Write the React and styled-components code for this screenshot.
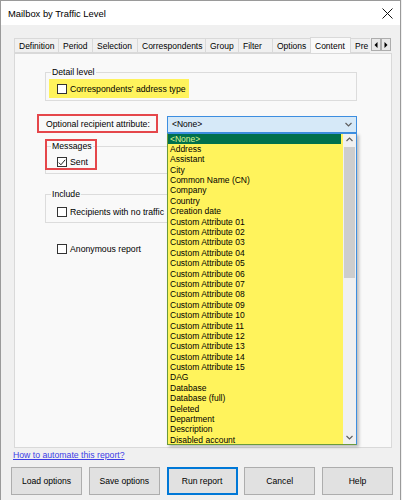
import React from "react";
import styled, { createGlobalStyle } from "styled-components";

const GlobalStyle = createGlobalStyle`
  html, body {
    margin: 0;
    padding: 0;
    background: #f0f0f0;
  }
  body {
    font-family: "Liberation Sans", Arial, sans-serif;
    font-size: 8.7px;
    color: #000;
  }
  * { box-sizing: border-box; }
`;

const tabs = [
  { label: "Definition", w: 45 },
  { label: "Period", w: 35 },
  { label: "Selection", w: 46 },
  { label: "Correspondents", w: 69 },
  { label: "Group", w: 34 },
  { label: "Filter", w: 35 },
  { label: "Options", w: 39 },
  { label: "Content", w: 41, active: true },
  { label: "Pre", w: 22 },
];

const attributes = [
  "<None>", "Address", "Assistant", "City", "Common Name (CN)", "Company",
  "Country", "Creation date",
  ...Array.from({ length: 15 }, (_, i) => `Custom Attribute ${String(i + 1).padStart(2, "0")}`),
  "DAG", "Database", "Database (full)", "Deleted", "Department", "Description",
  "Disabled account",
];

const buttons = ["Load options", "Save options", "Run report", "Cancel", "Help"];

const Window = styled.div`
  width: 401px;
  height: 500px;
  border: 1px solid #9a9a9a;
  border-bottom: none;
  background: #f0f0f0;
  display: flex;
  flex-direction: column;
`;

const TitleBar = styled.div`
  height: 24px;
  background: #fff;
  display: flex;
  align-items: center;
  justify-content: space-between;
  padding: 0 7px 0 7px;
  font-size: 9.4px;
`;

const Body = styled.div`
  flex: 1;
  display: flex;
  flex-direction: column;
  padding: 12px 8px 0 12px;
`;

const TabStrip = styled.div`
  height: 16px;
  display: flex;
  align-items: flex-end;
  position: relative;
  z-index: 2;
`;

const TabList = styled.div`
  width: 357px;
  height: 17px;
  overflow: hidden;
  display: flex;
  align-items: flex-end;
  padding-left: 1px;
`;

const Tab = styled.div`
  flex-shrink: 0;
  width: ${(p) => p.$w}px;
  height: ${(p) => (p.$active ? 17 : 15)}px;
  margin-right: -1px;
  margin-bottom: ${(p) => (p.$active ? -1 : 0)}px;
  border: 1px solid #d9d9d9;
  border-bottom: ${(p) => (p.$active ? "none" : "1px solid #d9d9d9")};
  background: ${(p) => (p.$active ? "#f9f9f9" : "#f0f0f0")};
  position: relative;
  z-index: ${(p) => (p.$active ? 1 : 0)};
  display: flex;
  align-items: center;
  padding-left: 4px;
  font-size: 8.5px;
  white-space: nowrap;
`;

const ScrollArrows = styled.div`
  display: flex;
  margin-left: 1px;
  margin-bottom: 2px;
`;

const ArrowBtn = styled.div`
  width: 10px;
  height: 13px;
  border: 1px solid #adadad;
  background: #e9e9e9;
  display: flex;
  align-items: center;
  justify-content: center;
`;

const Panel = styled.div`
  height: 395px;
  border: 1px solid #d9d9d9;
  background: #f9f9f9;
  padding: 13px 34px 0 30px;
  display: flex;
  flex-direction: column;
  margin-left: 1px;
`;

const Group = styled.fieldset`
  margin: ${(p) => p.$top}px 0 0 0;
  border: 1px solid #dcdcdc;
  padding: ${(p) => p.$pt}px 4px ${(p) => p.$pb}px 6px;
  min-width: 0;
  position: relative;
`;

const Legend = styled.legend`
  padding: 0 1px;
  margin-left: -1px;
  font-size: 8.7px;
  line-height: 10px;
`;

const Highlight = styled.div`
  width: 140px;
  height: 19px;
  margin-left: -3px;
  background: #fff35c;
  display: flex;
  align-items: center;
  padding-left: 8px;
`;

const CheckRow = styled.label`
  display: flex;
  align-items: center;
  gap: 3px;
  margin-left: ${(p) => p.$indent || 0}px;
  margin-top: ${(p) => p.$top || 0}px;
  height: 10px;
  white-space: nowrap;
`;

const Box = styled.span`
  width: 10px;
  height: 10px;
  border: 1px solid #333;
  background: #fff;
  display: inline-flex;
  align-items: center;
  justify-content: center;
  flex-shrink: 0;
`;

const AttributeRow = styled.div`
  margin: 13px 0 0 -8px;
  display: flex;
  align-items: center;
  justify-content: space-between;
`;

const RedBox = styled.div`
  border: 2px solid #e5474b;
  height: 19px;
  width: 121px;
  display: flex;
  align-items: center;
  padding-left: 7px;
  white-space: nowrap;
`;

const RedOverlay = styled.div`
  position: absolute;
  left: -1px;
  top: -12px;
  width: 52px;
  height: 31px;
  border: 2px solid #e5474b;
  pointer-events: none;
`;

const ComboWrap = styled.div`
  position: relative;
  width: 190px;
  margin-top: 1px;
`;

const Combo = styled.div`
  height: 17px;
  border: 1px solid #3d8ee0;
  background: #d6e9f8;
  display: flex;
  align-items: center;
  justify-content: space-between;
  padding: 0 4px 0 4px;
  font-size: 8.5px;
`;

const DropList = styled.div`
  position: absolute;
  top: 100%;
  left: 0;
  width: 190px;
  height: 312px;
  display: flex;
  border: 1px solid #3d8ee0;
  border-left-color: #6a9a3c;
  border-bottom-color: #6a9a3c;
  box-shadow: 2px 2px 3px rgba(0, 0, 0, 0.25);
  z-index: 5;
`;

const Items = styled.div`
  flex: 1;
  background: #fff35c;
  overflow: hidden;
`;

const Item = styled.div`
  height: 10.4px;
  line-height: 10.4px;
  padding-left: 2px;
  font-size: 8.5px;
  white-space: nowrap;
  background: ${(p) => (p.$selected ? "#00704c" : "transparent")};
  color: ${(p) => (p.$selected ? "#dff58e" : "#000")};
  margin-right: ${(p) => (p.$selected ? 2 : 0)}px;
`;

const ScrollBar = styled.div`
  width: 13px;
  background: #f0f0f0;
  display: flex;
  flex-direction: column;
`;

const ScrollBtn = styled.div`
  height: 12px;
  display: flex;
  align-items: center;
  justify-content: center;
`;

const Track = styled.div`
  flex: 1;
  padding: 1px 1px 0 1px;
`;

const Thumb = styled.div`
  height: 131px;
  background: #cdcdcd;
`;

const Link = styled.a`
  margin: 2px 0 0 0;
  color: #3d3de6;
  text-decoration: underline;
  font-size: 8.7px;
  line-height: 11px;
`;

const ButtonRow = styled.div`
  margin-top: 6px;
  display: flex;
  justify-content: space-between;
  width: 382px;
  margin-left: -2px;
`;

const Button = styled.button`
  width: 71px;
  height: 28px;
  background: #e1e1e1;
  border: ${(p) => (p.$default ? "2px solid #0078d7" : "1px solid #adadad")};
  font-family: inherit;
  font-size: 8.6px;
  color: #000;
  padding: 0;
`;

const Chevron = ({ up, color = "#606060" }) => (
  <svg width="7" height="5" viewBox="0 0 7 5">
    <path
      d={up ? "M0.5 4 L3.5 1 L6.5 4" : "M0.5 1 L3.5 4 L6.5 1"}
      fill="none"
      stroke={color}
      strokeWidth="1.2"
    />
  </svg>
);

const Tri = ({ left }) => (
  <svg width="4" height="6" viewBox="0 0 4 6">
    <path d={left ? "M3.5 0 L0.5 3 L3.5 6 Z" : "M0.5 0 L3.5 3 L0.5 6 Z"} fill="#000" />
  </svg>
);

const Check = ({ checked }) => (
  <Box>
    {checked && (
      <svg width="8" height="7" viewBox="0 0 8 7">
        <path d="M0.8 3.6 L2.9 5.8 L7.2 0.8" fill="none" stroke="#222" strokeWidth="1" />
      </svg>
    )}
  </Box>
);

export default function App() {
  return (
    <>
      <GlobalStyle />
      <Window>
        <TitleBar>
          <span>Mailbox by Traffic Level</span>
          <svg width="11" height="11" viewBox="0 0 11 11">
            <path d="M0.5 0.5 L10.5 10.5 M10.5 0.5 L0.5 10.5" stroke="#111" strokeWidth="1" />
          </svg>
        </TitleBar>
        <Body>
          <TabStrip>
            <TabList>
              {tabs.map((t) => (
                <Tab key={t.label} $w={t.w} $active={t.active}>
                  {t.label}
                </Tab>
              ))}
            </TabList>
            <ScrollArrows>
              <ArrowBtn><Tri left /></ArrowBtn>
              <ArrowBtn><Tri /></ArrowBtn>
            </ScrollArrows>
          </TabStrip>
          <Panel>
            <Group $top={0} $pt={2} $pb={2}>
              <Legend>Detail level</Legend>
              <Highlight>
                <CheckRow>
                  <Check />
                  Correspondents' address type
                </CheckRow>
              </Highlight>
            </Group>

            <AttributeRow>
              <RedBox>Optional recipient attribute:</RedBox>
              <ComboWrap>
                <Combo>
                  <span>&lt;None&gt;</span>
                  <Chevron />
                </Combo>
                <DropList>
                  <Items>
                    {attributes.map((a, i) => (
                      <Item key={a} $selected={i === 0}>{a}</Item>
                    ))}
                  </Items>
                  <ScrollBar>
                    <ScrollBtn><Chevron up /></ScrollBtn>
                    <Track><Thumb /></Track>
                    <ScrollBtn><Chevron /></ScrollBtn>
                  </ScrollBar>
                </DropList>
              </ComboWrap>
            </AttributeRow>

            <Group $top={8} $pt={6} $pb={6}>
              <Legend>Messages</Legend>
              <RedOverlay />
              <CheckRow $indent={5}>
                <Check checked />
                Sent
              </CheckRow>
            </Group>

            <Group $top={15} $pt={8} $pb={5}>
              <Legend>Include</Legend>
              <CheckRow $indent={5}>
                <Check />
                Recipients with no traffic
              </CheckRow>
            </Group>

            <CheckRow $indent={12} $top={21}>
              <Check />
              Anonymous report
            </CheckRow>
          </Panel>
          <Link href="#">How to automate this report?</Link>
          <ButtonRow>
            {buttons.map((b) => (
              <Button key={b} $default={b === "Run report"}>{b}</Button>
            ))}
          </ButtonRow>
        </Body>
      </Window>
    </>
  );
}
